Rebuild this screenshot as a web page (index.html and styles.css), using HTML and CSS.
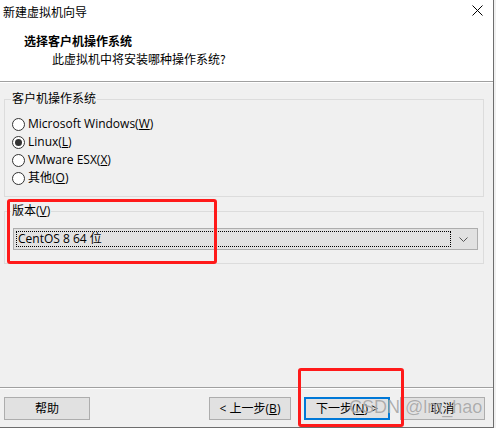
FILE: index.html
```html
<!DOCTYPE html>
<html lang="zh-CN">
<head>
<meta charset="utf-8">
<title>新建虚拟机向导</title>
<link rel="stylesheet" href="styles.css">
</head>
<body>
<div class="window">
  <div class="header">
    <div class="titlebar">
      <span class="title">新建虚拟机向导</span>
      <svg class="close" width="11" height="11" viewBox="0 0 11 11"><path d="M0.5 0.5 L10.5 10.5 M10.5 0.5 L0.5 10.5" stroke="#000" stroke-width="1" fill="none"/></svg>
    </div>
    <div class="heading">选择客户机操作系统</div>
    <div class="subtitle">此虚拟机中将安装哪种操作系统?</div>
  </div>
  <div class="content">
    <fieldset class="group group-os">
      <legend>客户机操作系统</legend>
      <div class="radios">
        <div class="radio"><span class="dot"></span><span>Microsoft Windows(<u>W</u>)</span></div>
        <div class="radio"><span class="dot checked"></span><span>Linux(<u>L</u>)</span></div>
        <div class="radio"><span class="dot"></span><span>VMware ESX(<u>X</u>)</span></div>
        <div class="radio"><span class="dot"></span><span>其他(<u>O</u>)</span></div>
      </div>
    </fieldset>
    <fieldset class="group group-ver">
      <legend>版本(<u>V</u>)</legend>
      <div class="combo">
        <div class="combo-value">CentOS 8 64 位</div>
        <svg class="chev" width="9" height="5" viewBox="0 0 9 5"><path d="M0.5 0.5 L4.5 4.5 L8.5 0.5" stroke="#555" stroke-width="1" fill="none"/></svg>
      </div>
    </fieldset>
  </div>
  <div class="footer">
    <button class="btn btn-help">帮助</button>
    <button class="btn btn-prev">&lt; 上一步(<u>B</u>)</button>
    <button class="btn btn-next">下一步(<u>N</u>) &gt;</button>
    <button class="btn btn-cancel">取消</button>
  </div>
</div>
<div class="mark mark-ver"></div>
<div class="mark mark-next"></div>
<div class="watermark">CSDN @lm_hao</div>
</body>
</html>
```
FILE: styles.css
```css
html, body {
  margin: 0;
  padding: 0;
}
body {
  width: 496px;
  height: 428px;
  background: #f0f0f0;
  font-family: "Open Sans", "Noto Sans CJK SC", sans-serif;
  font-size: 12px;
  line-height: 14px;
  color: #000;
  overflow: hidden;
  position: relative;
}
.window {
  width: 493px;
  height: 427px;
  border-right: 1px solid #6d6d6d;
  border-bottom: 1px solid #6d6d6d;
  display: flex;
  flex-direction: column;
}
.header {
  height: 81px;
  flex: none;
  background: #fff;
  border-bottom: 1px solid #a0a0a0;
  box-shadow: 0 1px 0 #fff;
}
.titlebar {
  height: 22px;
  display: flex;
  align-items: center;
  justify-content: space-between;
  padding: 0 10px 0 3px;
}
.title {
  font-family: "Noto Sans CJK SC", sans-serif;
  margin-top: 2px;
}
.close {
  display: block;
  margin-top: -2px;
}
.heading {
  font-family: "Noto Sans CJK SC", sans-serif;
  font-weight: bold;
  margin: 12px 0 0 24px;
}
.subtitle {
  font-family: "Noto Sans CJK SC", sans-serif;
  margin: 4px 0 0 52px;
}
.content {
  flex: 1;
}
.group {
  margin: 0 9px 0 4px;
  padding: 0;
  border: 1px solid #dcdcdc;
  min-width: 0;
}
.group legend {
  margin-left: 6px;
  padding: 0 1px;
  line-height: 14px;
}
.group-os {
  margin-top: 10px;
}
.radios {
  padding: 9px 0 9px 7px;
}
.radio {
  height: 18px;
  display: flex;
  align-items: center;
  gap: 3px;
}
.dot {
  width: 11px;
  height: 11px;
  border: 1px solid #333;
  border-radius: 50%;
  background: #fff;
  display: flex;
  align-items: center;
  justify-content: center;
  flex: none;
}
.dot.checked::after {
  content: "";
  width: 7px;
  height: 7px;
  border-radius: 50%;
  background: #333;
}
.group-ver {
  margin-top: 7px;
}
.combo {
  margin: 10px 5px 13px 8px;
  height: 20px;
  border: 1px solid #adadad;
  background: #e1e1e1;
  display: flex;
  align-items: center;
  padding: 0 4px 0 2px;
}
.combo-value {
  flex: 1;
  height: 14px;
  border: 1px dotted #000;
  padding: 0 1px;
  line-height: 14px;
}
.chev {
  display: block;
  margin: 1px 5px 0 8px;
}
.footer {
  height: 39px;
  flex: none;
  border-top: 1px solid #a0a0a0;
  box-shadow: inset 0 1px 0 #fff;
  display: flex;
  align-items: flex-start;
  padding: 9px 8px 0 4px;
  box-sizing: border-box;
  height: 40px;
}
.btn {
  height: 23px;
  background: #e1e1e1;
  border: 1px solid #adadad;
  font: inherit;
  line-height: 14px;
  padding: 0;
  color: #000;
}
.btn-help { width: 86px; }
.btn-prev { width: 82px; margin-left: auto; }
.btn-next { width: 86px; margin-left: 13px; border: 2px solid #0078d7; }
.btn-cancel { width: 85px; margin-left: 10px; }
.mark {
  position: absolute;
  border: 3px solid #ff1a1a;
  border-radius: 3px;
  box-sizing: border-box;
}
.mark-ver {
  left: 7px;
  top: 199px;
  width: 210px;
  height: 65px;
}
.mark-next {
  left: 298px;
  top: 368px;
  width: 106px;
  height: 59px;
}
.watermark {
  position: absolute;
  left: 349px;
  top: 397px;
  font-family: "Liberation Sans", sans-serif;
  font-size: 18px;
  line-height: 20px;
  color: rgba(150, 150, 150, 0.75);
  text-shadow: 0 0 1px rgba(255,255,255,0.6);
}
```
